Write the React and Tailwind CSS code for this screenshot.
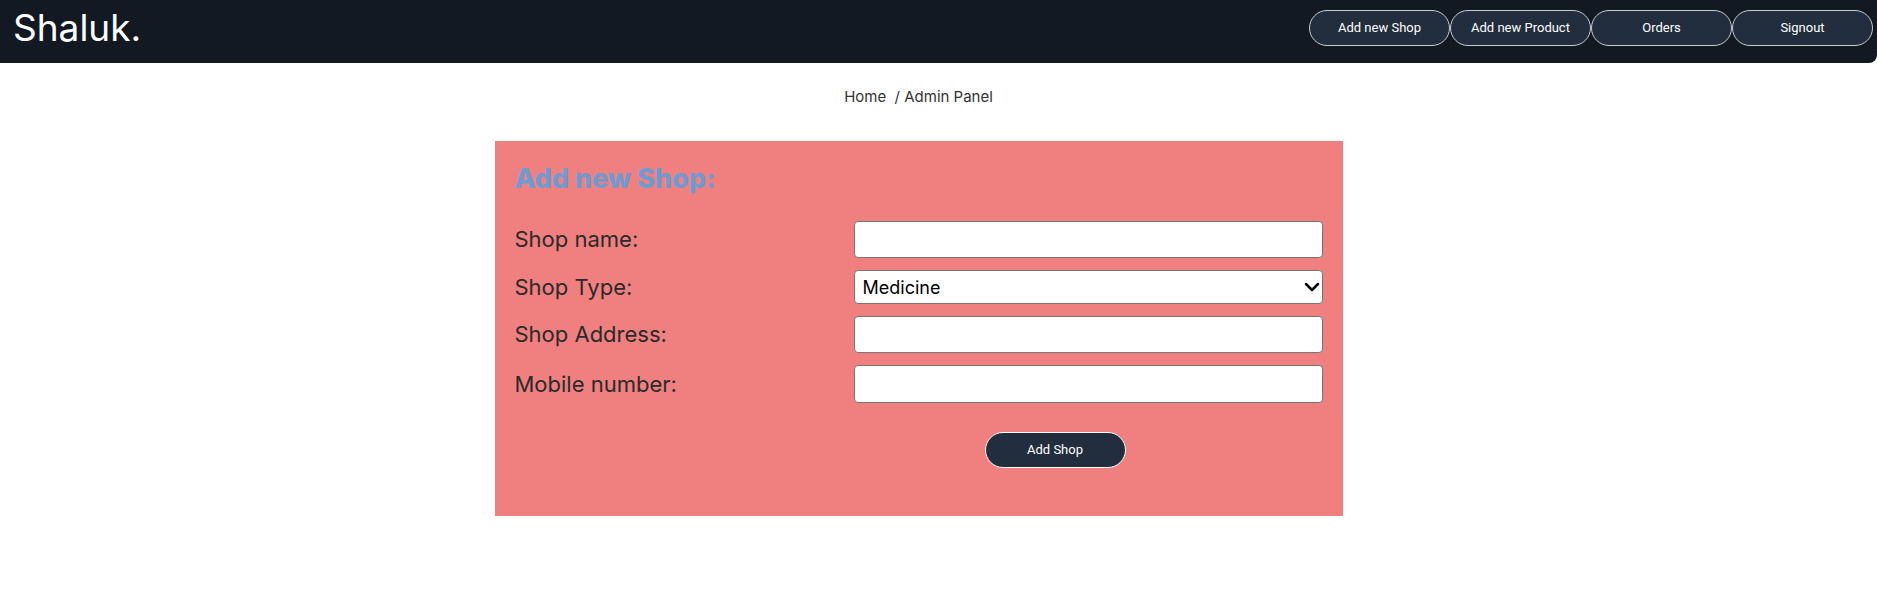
import React from "react";
import { ChevronDown } from "lucide-react";

const navLinks = ["Add new Shop", "Add new Product", "Orders", "Signout"];

function Navbar() {
  return (
    <div className="w-full h-[63px] bg-[#121923] rounded-br-lg flex justify-between items-start pl-[13px] pr-[4px]">
      <div className="mt-[5px] text-[37px] leading-[45px] text-white font-['Inter',sans-serif]">
        Shaluk.
      </div>
      <div className="flex mt-[10px]">
        {navLinks.map((l) => (
          <button
            key={l}
            className="w-[141px] h-[36px] rounded-full border border-[#c9ccd1] bg-[#222d3e] text-white text-[13px] font-['Roboto',sans-serif]"
          >
            {l}
          </button>
        ))}
      </div>
    </div>
  );
}

function Row({ label, children }) {
  return (
    <>
      <div className="text-[22px] text-[#2a2a2a] flex items-center">{label}</div>
      {children}
    </>
  );
}

export default function App() {
  return (
    <div className="min-h-screen bg-white font-['Inter',sans-serif]">
      <Navbar />

      <div className="flex flex-col items-center pr-10">
        {/* breadcrumb */}
        <div className="mt-[23px] text-[15px] leading-[22px] text-[#333]">
          Home &nbsp;/ Admin Panel
        </div>

        {/* form panel */}
        <div className="mt-[33px] w-[848px] bg-[#f08080] pl-5 pr-5 pt-[22px] pb-[48px]">
          <h2 className="text-[27px] leading-[32px] font-extrabold text-[#6f9bd0]">Add new Shop:</h2>

          <div className="mt-[26px] grid grid-cols-[339px_1fr] gap-y-3">
            <Row label="Shop name:">
              <input type="text" className="h-[37px] bg-white border border-[#767676] rounded-[4px] outline-none px-2" />
            </Row>
            <Row label="Shop Type:">
              <div className="relative">
                <select
                  defaultValue="Medicine"
                  className="w-full h-[34px] appearance-none bg-white border border-[#767676] rounded-[4px] text-[18px] text-black pl-2 outline-none"
                >
                  <option>Medicine</option>
                  <option>Grocery</option>
                  <option>Clothing</option>
                </select>
                <ChevronDown
                  strokeWidth={2.5}
                  className="absolute right-[-1px] top-[5px] w-6 h-6 text-black pointer-events-none"
                />
              </div>
            </Row>
            <Row label="Shop Address:">
              <input type="text" className="h-[37px] bg-white border border-[#767676] rounded-[4px] outline-none px-2" />
            </Row>
            <Row label="Mobile number:">
              <input type="text" className="h-[38px] bg-white border border-[#767676] rounded-[4px] outline-none px-2" />
            </Row>
          </div>

          <div className="mt-[29px] flex">
            <button className="ml-[470px] w-[141px] h-[36px] rounded-full border border-white bg-[#222d3e] text-white text-[13px] font-['Roboto',sans-serif]">
              Add Shop
            </button>
          </div>
        </div>
      </div>
    </div>
  );
}
